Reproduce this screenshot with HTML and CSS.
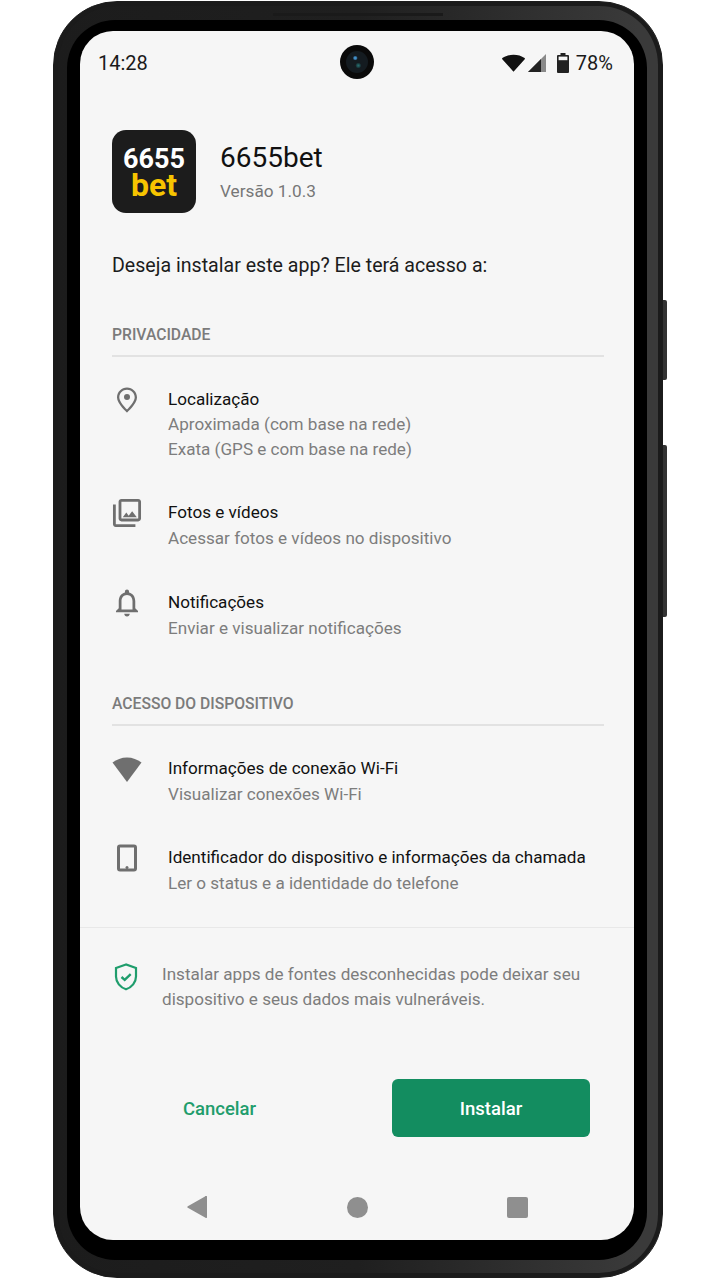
FILE: index.html
```html
<!DOCTYPE html>
<html lang="pt-BR">
<head>
    <meta charset="UTF-8">
    <meta name="viewport" content="width=device-width, initial-scale=1.0">
    <title>Instalar 6655bet</title>
    <link rel="stylesheet" href="styles.css">
</head>
<body>
    <div class="phone">
        <span class="speaker"></span>
        <span class="side-btn power"></span>
        <span class="side-btn volume"></span>
        <div class="bezel">
            <div class="screen">
                <div class="status-bar">
                    <span class="clock">14:28</span>
                    <span class="camera"><span class="lens"></span></span>
                    <div class="status-icons">
                        <svg class="st-wifi" viewBox="0 0 24 18"><path d="M12 18L0.3 5C0 4.600 0 4.200 .4 3.900 3.600 1.500 7.600.3 12 .3s8.400 1.200 11.600 3.600c.4.3.4.7.1 1.100z"/></svg>
                        <svg class="st-signal" viewBox="0 0 18 18"><path d="M0 18L18 0v18z" fill="#8a8a8a"/><path d="M0 18L13 5v13z"/></svg>
                        <svg class="st-battery" viewBox="0 0 12 20"><path d="M3.500 0h5v2H11a1 1 0 0 1 1 1v16a1 1 0 0 1-1 1H1a1 1 0 0 1-1-1V3a1 1 0 0 1 1-1h2.500z"/><rect x="1.600" y="3.600" width="8.800" height="3.600" fill="#f6f6f6"/></svg>
                        <span class="pct">78%</span>
                    </div>
                </div>

                <div class="content">
                    <div class="app-head">
                        <div class="app-icon">
                            <span class="logo-num">6655</span>
                            <span class="logo-bet">bet</span>
                        </div>
                        <div class="app-info">
                            <h1>6655bet</h1>
                            <p>Versão 1.0.3</p>
                        </div>
                    </div>

                    <p class="question">Deseja instalar este app? Ele terá acesso a:</p>

                    <h2 class="section-title">PRIVACIDADE</h2>
                    <div class="perm perm-first">
                        <svg class="perm-icon" viewBox="0 0 30 30"><path fill-rule="evenodd" d="M15 1.500C9.500 1.500 5 5.900 5 11.400c0 6.200 10 15.100 10 15.100s10-8.900 10-15.100c0-5.500-4.500-9.900-10-9.900zM7.300 11.400c0-4.200 3.500-7.600 7.700-7.600s7.700 3.400 7.700 7.600c0 3.700-5 9.400-7.700 12-2.700-2.600-7.700-8.300-7.700-12z"/><circle cx="15" cy="11" r="3"/></svg>
                        <div class="perm-text">
                            <h3>Localização</h3>
                            <p>Aproximada (com base na rede)</p>
                            <p>Exata (GPS e com base na rede)</p>
                        </div>
                    </div>
                    <div class="perm">
                        <svg class="perm-icon" viewBox="1.300 1.300 21.400 21.400"><path d="M20 4v12H8V4h12m0-2H8c-1.100 0-2 .9-2 2v12c0 1.100.9 2 2 2h12c1.100 0 2-.9 2-2V4c0-1.100-.9-2-2-2zm-8.500 9.670l1.690 2.260 2.480-3.100L19 15H9zM2 6v14c0 1.100.9 2 2 2h14v-2H4V6H2z"/></svg>
                        <div class="perm-text">
                            <h3>Fotos e vídeos</h3>
                            <p>Acessar fotos e vídeos no dispositivo</p>
                        </div>
                    </div>
                    <div class="perm perm-notif">
                        <svg class="perm-icon" viewBox="1.100 1.350 21.800 21.800"><path d="M12 22c1.100 0 2-.9 2-2h-4c0 1.100.9 2 2 2zm6-6v-5c0-3.070-1.630-5.640-4.500-6.320V4c0-.83-.67-1.500-1.500-1.500s-1.500.67-1.500 1.500v.68C7.640 5.360 6 7.920 6 11v5l-2 2v1h16v-1l-2-2zm-2 1H8v-6c0-2.480 1.510-4.500 4-4.500s4 2.020 4 4.500v6z"/></svg>
                        <div class="perm-text">
                            <h3>Notificações</h3>
                            <p>Enviar e visualizar notificações</p>
                        </div>
                    </div>

                    <h2 class="section-title section-two">ACESSO DO DISPOSITIVO</h2>
                    <div class="perm perm-wifi">
                        <svg class="perm-icon" viewBox="0 0 30 30"><path d="M15 28L.5 8.500C4.500 5.500 9.500 3.500 15 3.500s10.500 2 14.500 5z"/></svg>
                        <div class="perm-text">
                            <h3>Informações de conexão Wi-Fi</h3>
                            <p>Visualizar conexões Wi-Fi</p>
                        </div>
                    </div>
                    <div class="perm">
                        <svg class="perm-icon" viewBox="0 0 30 30"><path fill-rule="evenodd" d="M8 1.500h14a3 3 0 0 1 3 3v21a3 3 0 0 1-3 3H8a3 3 0 0 1-3-3v-21a3 3 0 0 1 3-3zM8 4.500v21h14v-21z"/><circle cx="15" cy="24.500" r="1.500"/></svg>
                        <div class="perm-text">
                            <h3>Identificador do dispositivo e informações da chamada</h3>
                            <p>Ler o status e a identidade do telefone</p>
                        </div>
                    </div>
                </div>

                <div class="warning">
                    <svg class="shield" viewBox="0 0 24 28"><path d="M12 1.500L2 5v8.500c0 5.800 4.200 10.900 10 12.800 5.800-1.900 10-7 10-12.800V5z" fill="none" stroke="#1f9d6c" stroke-width="2.200"/><path d="M7.500 14l3.200 2.800 6-5.600" fill="none" stroke="#1f9d6c" stroke-width="2.400"/></svg>
                    <p>Instalar apps de fontes desconhecidas pode deixar seu dispositivo e seus dados mais vulneráveis.</p>
                </div>

                <div class="actions">
                    <button class="btn-cancel">Cancelar</button>
                    <button class="btn-install">Instalar</button>
                </div>

                <div class="nav-bar">
                    <svg class="nav-back" viewBox="0 0 20 22"><path d="M18 .6a1 1 0 0 1 2 .4v20a1 1 0 0 1-1.500.8L.8 11.800a1 1 0 0 1 0-1.600z" fill="#8f8f8f"/></svg>
                    <span class="nav-home"></span>
                    <span class="nav-recent"></span>
                </div>
            </div>
        </div>
    </div>
</body>
</html>
```

FILE: styles.css
```css
* {
    box-sizing: border-box;
}
body {
    margin: 0;
    background: #fff;
    font-family: Roboto, "Liberation Sans", sans-serif;
}
.phone {
    position: relative;
    width: 610px;
    height: 1277px;
    margin: 1px 0 0 53px;
    padding: 18px 15px 17px 13px;
    border-radius: 64px;
    background: linear-gradient(90deg, #1c1c1c, #1f1f1f 50%, #3a3a3a 96%);
    border: 1px solid #1c1c1c;
    box-shadow: inset 0 0 0 4px #1b1b1b;
}
.speaker {
    position: absolute;
    top: 11px;
    left: 219px;
    width: 170px;
    height: 3px;
    background: #1a1a1a;
}
.side-btn {
    position: absolute;
    right: -5px;
    width: 4px;
    background: #333;
    border-radius: 0 2px 2px 0;
}
.power {
    top: 298px;
    height: 80px;
}
.volume {
    top: 443px;
    height: 172px;
}
.bezel {
    height: 100%;
    padding: 11px 13px 20px 13px;
    background: #000;
    border-radius: 48px;
}
.screen {
    display: flex;
    flex-direction: column;
    height: 100%;
    overflow: hidden;
    background: #f6f6f6;
    border-radius: 33px;
}

/* status bar */
.status-bar {
    position: relative;
    display: flex;
    justify-content: space-between;
    align-items: center;
    flex: none;
    height: 63px;
    padding: 0 21px 0 18px;
}
.clock {
    font-size: 20px;
    color: #1a1a1a;
}
.camera {
    position: absolute;
    left: 260px;
    top: 14px;
    width: 34px;
    height: 34px;
    border-radius: 50%;
    background: #0a0a0a;
}
.lens {
    position: absolute;
    left: 6px;
    top: 6px;
    width: 22px;
    height: 22px;
    border-radius: 50%;
    background:
        radial-gradient(circle at 42% 32%, #4a9ad4 0, #3d86bd 1.200px, transparent 2.500px),
        radial-gradient(circle at 56% 66%, #2b6e70 0, #1f5557 1.200px, transparent 3px),
        #141b20;
}
.status-icons {
    display: flex;
    align-items: center;
}
.st-wifi {
    width: 23px;
    height: 18px;
    margin-right: 3px;
    fill: #111;
}
.st-signal {
    width: 18px;
    height: 18px;
    margin-right: 11px;
    fill: #222;
}
.st-battery {
    width: 12px;
    height: 20px;
    margin-right: 7px;
    fill: #222;
}
.pct {
    font-size: 20px;
    color: #1a1a1a;
}

/* main content */
.content {
    flex: none;
    padding: 36px 30px 0 32px;
}
.app-head {
    display: flex;
    align-items: center;
}
.app-icon {
    display: flex;
    flex-direction: column;
    align-items: center;
    justify-content: center;
    width: 84px;
    height: 83px;
    background: #1c1c1c;
    border-radius: 14px;
    font-weight: 700;
}
.logo-num {
    color: #fff;
    font-size: 27px;
    line-height: 26px;
}
.logo-bet {
    color: #f6c400;
    font-size: 32px;
    line-height: 26px;
}
.app-info {
    margin-left: 24px;
}
.app-info h1 {
    margin: 0;
    font-size: 28px;
    font-weight: 400;
    line-height: 32px;
    color: #111;
}
.app-info p {
    margin: 7px 0 0;
    font-size: 17.200px;
    line-height: 20px;
    color: #777;
}
.question {
    margin: 40px 0 0;
    font-size: 19.600px;
    line-height: 26px;
    color: #1c1c1c;
}
.section-title {
    margin: 46px 0 0;
    padding-bottom: 10px;
    border-bottom: 2px solid #e2e2e2;
    font-size: 15.700px;
    font-weight: 500;
    line-height: 20px;
    color: #7b7b7b;
}
.section-two {
    margin-top: 53px;
}
.perm {
    display: flex;
    margin-top: 37px;
}
.perm-notif {
    margin-top: 38px;
}
.perm-first {
    margin-top: 30px;
}
.perm-wifi {
    margin-top: 29px;
}
.perm-icon {
    flex: none;
    width: 30px;
    height: 30px;
    margin: -1px 26px 0 0;
    fill: #6f6f6f;
}
.perm-text h3 {
    margin: 0;
    font-size: 17.100px;
    font-weight: 400;
    line-height: 27px;
    color: #111;
}
.perm-first .perm-text h3 {
    line-height: 25px;
}
.perm-text p {
    margin: 0;
    font-size: 17.100px;
    line-height: 25px;
    color: #7d7d7d;
}

/* warning + buttons */
.warning {
    display: flex;
    flex: none;
    margin-top: 31px;
    padding: 34px 50px 0 34px;
    border-top: 1px solid #e8e8e8;
}
.shield {
    flex: none;
    width: 24px;
    height: 28px;
    margin: 1px 24px 0 0;
}
.warning p {
    margin: 0;
    font-size: 17.100px;
    line-height: 25px;
    color: #7d7d7d;
}
.actions {
    display: flex;
    align-items: center;
    flex: none;
    margin-top: 67px;
}
.actions button {
    padding: 1px 0 0;
    border: none;
    background: none;
    font-family: inherit;
    font-size: 18.500px;
    font-weight: 500;
    cursor: pointer;
}
.actions .btn-cancel {
    width: 279px;
    margin-right: 33px;
    color: #1f9d6c;
}
.actions .btn-install {
    width: 198px;
    height: 58px;
    background: #138d60;
    border-radius: 6px;
    color: #fff;
}

/* nav bar */
.nav-bar {
    display: flex;
    align-items: center;
    flex: none;
    margin-top: 59px;
    padding-left: 107px;
}
.nav-back {
    width: 20px;
    height: 22px;
}
.nav-home {
    width: 21px;
    height: 21px;
    margin-left: 140px;
    background: #8f8f8f;
    border-radius: 50%;
}
.nav-recent {
    width: 21px;
    height: 21px;
    margin-left: 139px;
    background: #8f8f8f;
    border-radius: 2px;
}
```
